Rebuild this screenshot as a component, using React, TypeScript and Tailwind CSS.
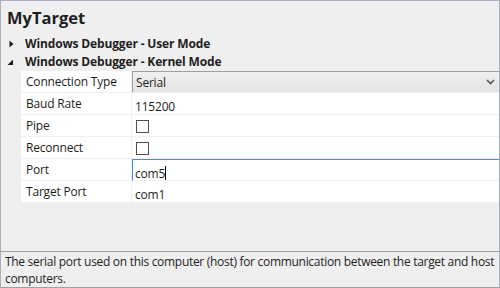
import React from "react";

const font = { fontFamily: '"Open Sans", "Noto Sans", sans-serif' };

function Row({ label, children, valueClass = "" }: { label: string; children?: React.ReactNode; valueClass?: string }) {
  return (
    <div className="flex h-[22px]">
      <div className="w-[111px] shrink-0 border-b border-r border-[#f0f0f0] pl-[5px] text-[12px] leading-[22px] tracking-[-0.2px] text-[#1e1e1e]">{label}</div>
      <div className={"flex-1 border-b border-[#f0f0f0] " + valueClass}>{children}</div>
    </div>
  );
}

function Check() {
  return <div className="ml-[4px] mt-[5px] h-[13px] w-[13px] border border-[#505050] bg-white" />;
}

export default function App() {
  return (
    <div className="h-[288px] w-[500px] overflow-hidden bg-[#efefef]" style={font}>
      <div className="flex h-[288px] flex-col border-x border-t border-[#a7b0bc]">
        <div className="h-[253px]">
          <div className="pl-[6px] pt-[5px] text-[16.5px] font-bold leading-[24px] text-[#1e1e1e]">MyTarget</div>
          <div className="mt-[5px] flex h-[18px] items-center">
            <svg width="24" height="18" viewBox="0 0 24 18" className="shrink-0">
              <path d="M8.5 5.5 L12.5 9 L8.5 12.5 Z" fill="#1e1e1e" />
            </svg>
            <span className="text-[12px] font-bold leading-[18px] tracking-[-0.15px] text-[#1e1e1e]">Windows Debugger - User Mode</span>
          </div>
          <div className="flex h-[18px] items-center">
            <svg width="24" height="18" viewBox="0 0 24 18" className="shrink-0">
              <path d="M12 6.5 L12 12 L6.5 12 Z" fill="#1e1e1e" />
            </svg>
            <span className="text-[12px] font-bold leading-[18px] tracking-[-0.15px] text-[#1e1e1e]">Windows Debugger - Kernel Mode</span>
          </div>
          <div className="ml-[20px] bg-white">
            <Row label="Connection Type" valueClass="flex items-center justify-between border-l border-t border-l-[#a0a0a0] border-t-[#a0a0a0] bg-gradient-to-b from-[#f0f0f0] to-[#e3e3e3]">
              <span className="pl-[3px] text-[12px] leading-[19px] tracking-[-0.2px] text-[#1e1e1e]">Serial</span>
              <svg width="9" height="6" viewBox="0 0 9 6" className="mr-[4px]">
                <path d="M1 1 L4.5 4.5 L8 1" stroke="#555" strokeWidth="1.6" fill="none" />
              </svg>
            </Row>
            <Row label="Baud Rate">
              <span className="pl-[3px] text-[12px] leading-[17px] tracking-[-0.2px] text-[#1e1e1e]">115200</span>
            </Row>
            <Row label="Pipe"><Check /></Row>
            <Row label="Reconnect"><Check /></Row>
            <Row label="Port" valueClass="border-l border-t border-l-[#3d8ee6] border-t-[#3d8ee6]">
              <span className="pl-[2px] text-[12px] leading-[18px] tracking-[-0.2px] text-[#1e1e1e]">com5</span>
              <span className="inline-block h-[14px] w-[1px] translate-y-[2px] bg-black" />
            </Row>
            <Row label="Target Port">
              <span className="pl-[3px] text-[12px] leading-[17px] tracking-[-0.2px] text-[#1e1e1e]">com1</span>
            </Row>
          </div>
        </div>
        <div className="flex-1 border-t border-b border-[#a0a0a0] pl-[4px] pt-[1px] text-[12px] leading-[17px] tracking-[-0.3px] text-[#1e1e1e]">
          The serial port used on this computer (host) for communication between the target and host computers.
        </div>
      </div>
    </div>
  );
}
